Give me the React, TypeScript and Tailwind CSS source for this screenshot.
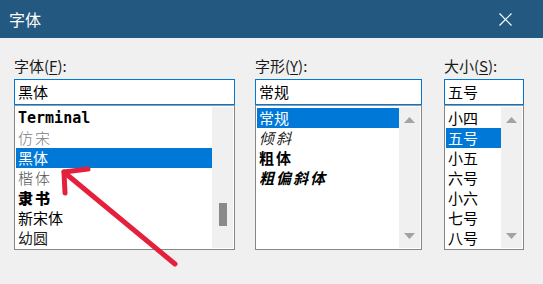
import React from 'react';

const font = { fontFamily: '"Noto Sans CJK SC", "Microsoft YaHei", sans-serif' };

type Item = { text: string; cls?: string };

const Label = ({ text, hot }: { text: string; hot: string }) => (
  <div className="h-[20px] mb-[3px] text-[15px] leading-[20px] text-[#1a1a1a] whitespace-nowrap">
    {text}(<span className="underline underline-offset-2">{hot}</span>):
  </div>
);

const Up = () => (
  <svg width="11" height="6" viewBox="0 0 11 6">
    <path d="M5.5 0 L11 6 L0 6 Z" fill="#a3a3a3" />
  </svg>
);
const Down = () => (
  <svg width="11" height="6" viewBox="0 0 11 6">
    <path d="M0 0 L11 0 L5.5 6 Z" fill="#a3a3a3" />
  </svg>
);

const Column = ({
  label,
  hot,
  value,
  items,
  selected,
  width,
  arrows,
}: {
  label: string;
  hot: string;
  value: string;
  items: Item[];
  selected: number;
  width: string;
  arrows: boolean;
}) => (
  <div className={`${width} flex flex-col`}>
    <Label text={label} hot={hot} />
    <div className="h-[26px] border border-[#0078d7] bg-white px-[3px] text-[15px] leading-[24px] text-black">
      {value}
    </div>
    <div className="h-[145px] border border-[#868686] border-t-[#9a9a9a] bg-white p-px flex">
      <div className="flex-1 pt-px overflow-hidden">
        {items.map((it, i) => (
          <div
            key={i}
            className={`h-[20px] pl-[2px] text-[15px] leading-[20px] whitespace-nowrap ${
              i === selected ? 'bg-[#0078d7] text-white' : it.cls ?? 'text-black'
            }`}
          >
            {it.text}
          </div>
        ))}
      </div>
      <div className="w-[21px] bg-[#f0f0f0] flex flex-col items-center">
        {arrows ? (
          <>
            <div className="pt-[10px]">
              <Up />
            </div>
            <div className="flex-1" />
            <div className="pb-[9px]">
              <Down />
            </div>
          </>
        ) : (
          <>
            <div className="h-[96px]" />
            <div className="w-[8px] h-[23px] bg-[#8a8a8a]" />
          </>
        )}
      </div>
    </div>
  </div>
);

export default function App() {
  return (
    <div className="w-[543px] h-[284px] bg-[#f0f0f0] relative overflow-hidden" style={font}>
      <div className="h-[38px] bg-[#235980] flex items-center justify-between pl-[9px] pr-[31px]">
        <span className="text-white text-[16px] leading-none">字体</span>
        <svg width="13" height="13" viewBox="0 0 13 13">
          <path d="M0.5 0.5 L12.5 12.5 M12.5 0.5 L0.5 12.5" stroke="white" strokeWidth="1.2" />
        </svg>
      </div>
      <div className="flex pl-[14px] pt-[18px]">
        <Column
          label="字体"
          hot="F"
          value="黑体"
          width="w-[221px]"
          arrows={false}
          selected={2}
          items={[
            { text: 'Terminal', cls: 'text-black font-bold [font-family:"DejaVu_Sans_Mono",monospace] text-[14px]' },
            { text: '仿宋', cls: 'text-[#808080] font-light tracking-[2px]' },
            { text: '黑体' },
            { text: '楷体', cls: 'text-[#555] font-light tracking-[2px]' },
            { text: '隶书', cls: 'text-black font-black text-[13px] tracking-[2px]' },
            { text: '新宋体' },
            { text: '幼圆', cls: 'text-[#222]' },
          ]}
        />
        <div className="w-[20px]" />
        <Column
          label="字形"
          hot="Y"
          value="常规"
          width="w-[167px]"
          arrows
          selected={0}
          items={[
            { text: '常规' },
            { text: '倾斜', cls: 'italic text-[#222] tracking-[2px]' },
            { text: '粗体', cls: 'font-bold text-black tracking-[2px]' },
            { text: '粗偏斜体', cls: 'italic font-bold text-black tracking-[2px]' },
          ]}
        />
        <div className="w-[22px]" />
        <Column
          label="大小"
          hot="S"
          value="五号"
          width="w-[80px]"
          arrows
          selected={1}
          items={['小四', '五号', '小五', '六号', '小六', '七号', '八号'].map((t) => ({ text: t }))}
        />
      </div>
      <svg className="absolute left-0 top-0 pointer-events-none" width="543" height="284" viewBox="0 0 543 284">
        <g stroke="#e4213c" strokeWidth="5" strokeLinecap="round" fill="none">
          <path d="M175 264 L65 173" />
          <path d="M64 172 L88 169" />
          <path d="M64 172 L65 193" />
        </g>
      </svg>
    </div>
  );
}
